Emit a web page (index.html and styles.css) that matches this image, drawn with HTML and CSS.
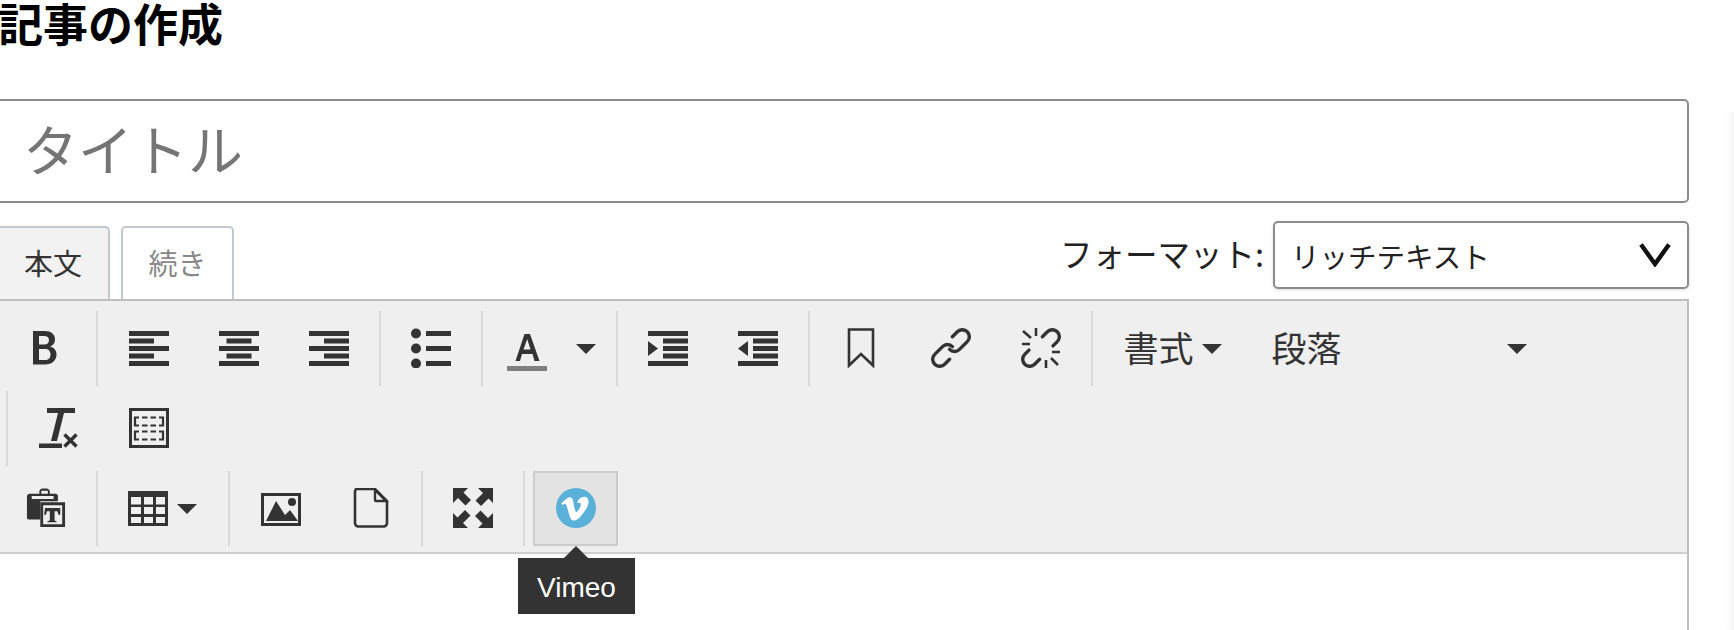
FILE: index.html
```html
<!DOCTYPE html>
<html lang="ja">
<head>
<meta charset="utf-8">
<title>記事の作成</title>
<link rel="stylesheet" href="styles.css">
</head>
<body>
<aside class="side-panel"></aside>
<main class="page">
  <h1 class="page-title">記事の作成</h1>
  <input class="title-input" type="text" placeholder="タイトル">
  <div class="tab-row">
    <div class="tabs">
      <div class="tab tab-active">本文</div>
      <div class="tab tab-idle">続き</div>
    </div>
    <div class="format">
      <span class="format-label">フォーマット:</span>
      <div class="format-select">
        <span>リッチテキスト</span>
        <svg class="chevron" viewBox="0 0 32 24"><path d="M2 1.500 L16 21 L30 1.500" fill="none" stroke="#111" stroke-width="4.400"/></svg>
      </div>
    </div>
  </div>
  <section class="editor">
    <div class="toolbar">
      <div class="row">
        <div class="group">
          <button class="btn"><svg class="icon" viewBox="0 0 40 40"><path fill-rule="evenodd" d="M7 3h12c6 0 10 3 10 8.500 0 3.500-2 6-5 7 4 1 6.500 3.800 6.500 8 0 6-4.500 10-11.500 10H7zM13 8v8.500h5c3.200 0 5-1.600 5-4.300S21.200 8 18 8zM13 21v11h6c3.500 0 5.500-2 5.500-5.500S22.500 21 19 21z"/></svg></button>
        </div>
        <div class="group">
          <button class="btn"><svg class="icon" viewBox="0 0 40 40"><path d="M0 3h40v5H0zM0 10.500h25v5H0zM0 18h40v5H0zM0 25.500h25v5H0zM0 33h40v5H0z"/></svg></button>
          <button class="btn"><svg class="icon" viewBox="0 0 40 40"><path d="M0 3h40v5H0zM7.500 10.500h25v5h-25zM0 18h40v5H0zM7.500 25.500h25v5h-25zM0 33h40v5H0z"/></svg></button>
          <button class="btn"><svg class="icon" viewBox="0 0 40 40"><path d="M0 3h40v5H0zM15 10.500h25v5H15zM0 18h40v5H0zM15 25.500h25v5H15zM0 33h40v5H0z"/></svg></button>
        </div>
        <div class="group">
          <button class="btn"><svg class="icon" viewBox="0 0 40 40"><circle cx="5" cy="5.500" r="5"/><circle cx="5" cy="20.500" r="5"/><circle cx="5" cy="35.500" r="5"/><path d="M15 3h25v5H15zM15 18h25v5H15zM15 33h25v5H15z"/></svg></button>
        </div>
        <div class="group">
          <button class="btn btn-color">
            <svg class="icon" viewBox="0 0 40 44"><path fill-rule="evenodd" d="M8.500 34 L17.500 7h5.500L32.500 34h-5l-2-7H15L13 34zM16.500 22.500h7L20.200 12z"/><rect y="39" width="40" height="5" fill="#808080"/></svg>
            <i class="caret"></i>
          </button>
        </div>
        <div class="group">
          <button class="btn"><svg class="icon" viewBox="0 0 40 40"><path d="M0 3h40v5H0zM15 10.500h25v5H15zM15 18h25v5H15zM15 25.500h25v5H15zM0 33h40v5H0zM0 13l10 7.500L0 28z"/></svg></button>
          <button class="btn"><svg class="icon" viewBox="0 0 40 40"><path d="M0 3h40v5H0zM15 10.500h25v5H15zM15 18h25v5H15zM15 25.500h25v5H15zM0 33h40v5H0zM10 13L0 20.500 10 28z"/></svg></button>
        </div>
        <div class="group">
          <button class="btn"><svg class="icon" viewBox="0 0 40 40"><path d="M8 1.500h24v36L20 26 8 37.500z" fill="none" stroke="#333" stroke-width="2.600"/></svg></button>
          <button class="btn"><svg class="icon" viewBox="0 0 40 40"><g transform="rotate(-45 20 20)" fill="none" stroke="#333" stroke-width="3.400" stroke-linecap="round"><path d="M22 20A7 7 0 0 0 15 13H4A7 7 0 0 0 4 27H11"/><path d="M18 20A7 7 0 0 0 25 27H36A7 7 0 0 0 36 13H29"/></g></svg></button>
          <button class="btn"><svg class="icon" viewBox="0 0 40 40"><g transform="rotate(-45 20 20)" fill="none" stroke="#333" stroke-width="3.400" stroke-linecap="round"><path d="M10 13H4A7 7 0 0 0 4 27H11"/><path d="M30 27H36A7 7 0 0 0 36 13H29"/></g><path d="M2 3l8 7M1 16h8M15 0v8M25 32v8M31 24h8M30 30l7 7" fill="none" stroke="#333" stroke-width="2.600"/></svg></button>
        </div>
        <div class="group group-last">
          <button class="btn-text btn-format"><span>書式</span><i class="caret"></i></button>
          <button class="btn-text btn-paragraph"><span>段落</span><i class="caret"></i></button>
        </div>
      </div>
      <div class="row row-second">
        <div class="group">
          <button class="btn"><svg class="icon" viewBox="0 0 40 40"><path d="M8 0h28v5H8zM19 5h6l-7 28h-6zM0 35.500h23v5H0z"/><path d="M25.500 26.500l12 12M37.500 26.500l-12 12" fill="none" stroke="#333" stroke-width="3.400"/></svg></button>
          <button class="btn"><svg class="icon" viewBox="0 0 40 40"><path fill-rule="evenodd" d="M0 0h40v40H0zM3 3v34h34V3z"/><path d="M10 9.500H6v8h4M13 9.500h5.500M21.500 9.500H27M30 9.500h4v8h-4M13 17.500h5.500M21.500 17.500H27M10 23.500H6v8h4M13 23.500h5.500M21.500 23.500H27M30 23.500h4v8h-4M13 31.500h5.500M21.500 31.500H27" fill="none" stroke="#333" stroke-width="2.200"/></svg></button>
        </div>
      </div>
      <div class="row">
        <div class="group">
          <button class="btn"><svg class="icon" viewBox="0 0 40 42"><path d="M3 6h10V4c0-2 1.500-3.500 3.500-3.500h4C22.500.5 24 2 24 4v2h6c1.500 0 2.500 1 2.500 2.500V14H14v19H2c-1.500 0-2-.8-2-2V8.500C0 7 1.500 6 3 6zM15 4v2h7V4c0-.7-.5-1-1-1h-5c-.5 0-1 .3-1 1zM5 8.500v3h23v-3z"/><path fill-rule="evenodd" d="M14 15h26v26H14zM17 18v20h20V18z"/><path d="M19 21h16v7h-2l-1-3.500h-3V34l2 .8V36H21.500v-1.200l2.500-.8V24.500h-3L20 28h-2z"/></svg></button>
        </div>
        <div class="group">
          <button class="btn btn-table">
            <svg class="icon" viewBox="0 0 40 40"><path fill-rule="evenodd" d="M0 3h40v35H0zM3 9v7.500h10V9zM16 9v7.500h9V9zM28 9v7.500h9V9zM3 19v7h10v-7zM16 19v7h9v-7zM28 19v7h9v-7zM3 29v6h10v-6zM16 29v6h9v-6zM28 29v6h9v-6z"/></svg>
            <i class="caret"></i>
          </button>
        </div>
        <div class="group">
          <button class="btn"><svg class="icon" viewBox="0 0 40 40"><path fill-rule="evenodd" d="M0 5h40v33H0zM3 8v27h34V8z"/><path d="M5 33L15 13l9 14 5-5 8 11z"/><circle cx="31" cy="14" r="4"/></svg></button>
          <button class="btn"><svg class="icon" viewBox="0 0 40 40"><path d="M6 1h18l12 12v22c0 2-1.500 3.500-3.500 3.500h-25C5.500 38.500 4 37 4 35V3.500C4 2 5 1 6 1z" fill="none" stroke="#333" stroke-width="2.600"/><path d="M24 2l11 11H25c-.7 0-1-.4-1-1z" fill="none" stroke="#333" stroke-width="2.400"/></svg></button>
        </div>
        <div class="group">
          <button class="btn"><svg class="icon" viewBox="0 0 40 40"><path d="M0 0h15l-4.500 4.500L18 12l-5.500 5.500L5 10l-5 5zM40 0v15l-4.500-4.500L28 18l-5.500-5.500L30 5 25 0zM0 40V25l4.500 4.500L12 22l5.500 5.500L10 35l5 5zM40 40H25l4.500-4.500L22 28l5.500-5.500L35 30l5-5z"/></svg></button>
        </div>
        <div class="group">
          <button class="btn btn-hover"><svg class="icon" viewBox="0 0 40 40"><circle cx="20" cy="20" r="20" fill="#59b0d9"/><path fill="#fff" d="M32.500 14.600c-.1 2.600-1.900 6.200-5.500 10.800-3.700 4.800-6.800 7.200-9.400 7.200-1.600 0-2.900-1.500-4-4.400l-2.200-8c-.8-2.900-1.700-4.400-2.600-4.400-.2 0-.9.400-2.200 1.300l-1.300-1.700c1.400-1.200 2.700-2.400 4-3.600 1.800-1.600 3.200-2.400 4.100-2.500 2.100-.2 3.400 1.300 3.900 4.300.5 3.300.9 5.400 1.100 6.200.6 2.800 1.300 4.200 2 4.200.6 0 1.400-.9 2.600-2.800 1.100-1.800 1.800-3.200 1.800-4.100.1-1.600-.5-2.400-1.800-2.400-.6 0-1.300.1-2 .4 1.300-4.400 3.900-6.500 7.600-6.400 2.800.1 4 1.900 3.900 5.900z"/></svg></button>
          <div class="tooltip">Vimeo</div>
        </div>
      </div>
    </div>
    <div class="editor-body"></div>
  </section>
</main>
</body>
</html>
```
FILE: styles.css
```css
* { box-sizing: border-box; }

html, body {
  margin: 0;
  height: 630px;
  overflow: hidden;
  background: #fff;
}

body {
  font-family: "Noto Sans CJK JP", "Liberation Sans", sans-serif;
  color: #333;
}

.page {
  width: 1699px;
  margin-left: -10px;
  display: flex;
  flex-direction: column;
}

.side-panel {
  position: absolute;
  left: 1730px;
  top: 112px;
  width: 4px;
  height: 518px;
  background: linear-gradient(to right, #fafafa, #f4f4f4);
  box-shadow: 0 0 8px rgba(0, 0, 0, 0.06);
}

.page-title {
  margin: 0 0 0 8px;
  height: 99px;
  font-size: 45px;
  line-height: 46px;
  font-weight: 700;
  color: #000;
}

.title-input {
  display: block;
  width: 100%;
  height: 104px;
  border: 2px solid #8c8c8c;
  border-radius: 5px;
  padding: 0 31px 8px;
  font: 400 55px "Noto Sans CJK JP", sans-serif;
  outline: none;
  background: #fff;
}

.title-input::placeholder {
  color: #757575;
  opacity: 1;
}

.tab-row {
  display: flex;
  justify-content: space-between;
  align-items: flex-start;
  height: 96px;
  padding-top: 18px;
}

.tabs {
  display: flex;
  gap: 11px;
  padding-top: 5px;
}

.tab {
  height: 73px;
  border: 2px solid #c3c8cc;
  border-bottom: 0;
  border-radius: 5px 5px 0 0;
  font-size: 29px;
  line-height: 68px;
  text-align: center;
}

.tab-active {
  width: 120px;
  padding-left: 6px;
  background: #f2f2f2;
  color: #333;
}

.tab-idle {
  width: 113px;
  background: #fff;
  color: #888;
}

.format {
  display: flex;
  align-items: center;
  gap: 9px;
}

.format-label {
  height: 68px;
  font-size: 32.500px;
  line-height: 64px;
  color: #222;
}

.format-select {
  width: 416px;
  height: 68px;
  border: 2px solid #8c8c8c;
  border-radius: 5px;
  box-shadow: 0 1px 3px rgba(0, 0, 0, 0.15);
  display: flex;
  align-items: center;
  justify-content: space-between;
  padding: 0 16px 0 16px;
  font-size: 28.500px;
  color: #222;
}

.chevron {
  width: 32px;
  height: 24px;
}

.editor {
  height: 331px;
  border: solid #bfbfbf;
  border-width: 2px 2px 0 0;
}

.toolbar {
  height: 253px;
  background: #efefef;
  border-bottom: 2px solid #cfcfcf;
  padding: 10px 0 0 3.500px;
  display: flex;
  flex-direction: column;
  gap: 5px;
}

.row {
  display: flex;
  height: 75px;
}

.row-second {
  margin-left: 12.500px;
}

.group {
  position: relative;
  display: flex;
  height: 75px;
  border-left: 2px solid #d9d9d9;
  padding: 0 7.500px 0 3px;
}

.btn,
.btn-text {
  display: flex;
  align-items: center;
  height: 75px;
  margin: 0 0 0 5px;
  padding: 0;
  border: 2px solid transparent;
  background: none;
  color: #333;
  font: inherit;
}

.btn {
  width: 85px;
  justify-content: center;
}

.btn-color {
  width: 117px;
  justify-content: flex-start;
  padding-left: 14px;
}

.btn-table {
  width: 114.500px;
  justify-content: flex-start;
  padding-left: 20px;
}

.btn-hover {
  background: #e3e3e3;
  border-color: #cccccc;
}

.icon {
  display: block;
  width: 40px;
  height: 40px;
  fill: #333;
  transform: translateY(-1px);
}

.btn-color .icon {
  height: 44px;
  transform: translateY(0);
}

.caret {
  display: block;
  width: 0;
  height: 0;
  border: solid transparent;
  border-width: 10px 10px 0;
  border-top-color: #333;
}

.btn-color .caret {
  margin-left: 29px;
}

.btn-table .caret {
  margin-left: 9px;
}

.group-last {
  padding-right: 0;
}

.btn-text {
  font-size: 35px;
  justify-content: flex-start;
}

.btn-text span {
  margin-top: -4px;
}

.btn-format {
  width: 129px;
  margin-left: 3px;
  padding-left: 23px;
}

.btn-format .caret {
  margin-left: 8px;
}

.btn-paragraph {
  width: 290px;
  margin-left: 28px;
  padding-left: 14px;
}

.btn-paragraph .caret {
  margin-left: 165px;
}

.tooltip {
  position: absolute;
  z-index: 2;
  left: -7px;
  top: 87px;
  width: 117px;
  height: 56px;
  background: #333;
  color: #fff;
  font: 400 28px/60px "Liberation Sans", sans-serif;
  text-align: center;
}

.tooltip::before {
  content: "";
  position: absolute;
  left: 46px;
  top: -12px;
  border: solid transparent;
  border-width: 0 12.500px 12px;
  border-bottom-color: #333;
}

.editor-body {
  height: 76px;
  background: #fff;
}
```
